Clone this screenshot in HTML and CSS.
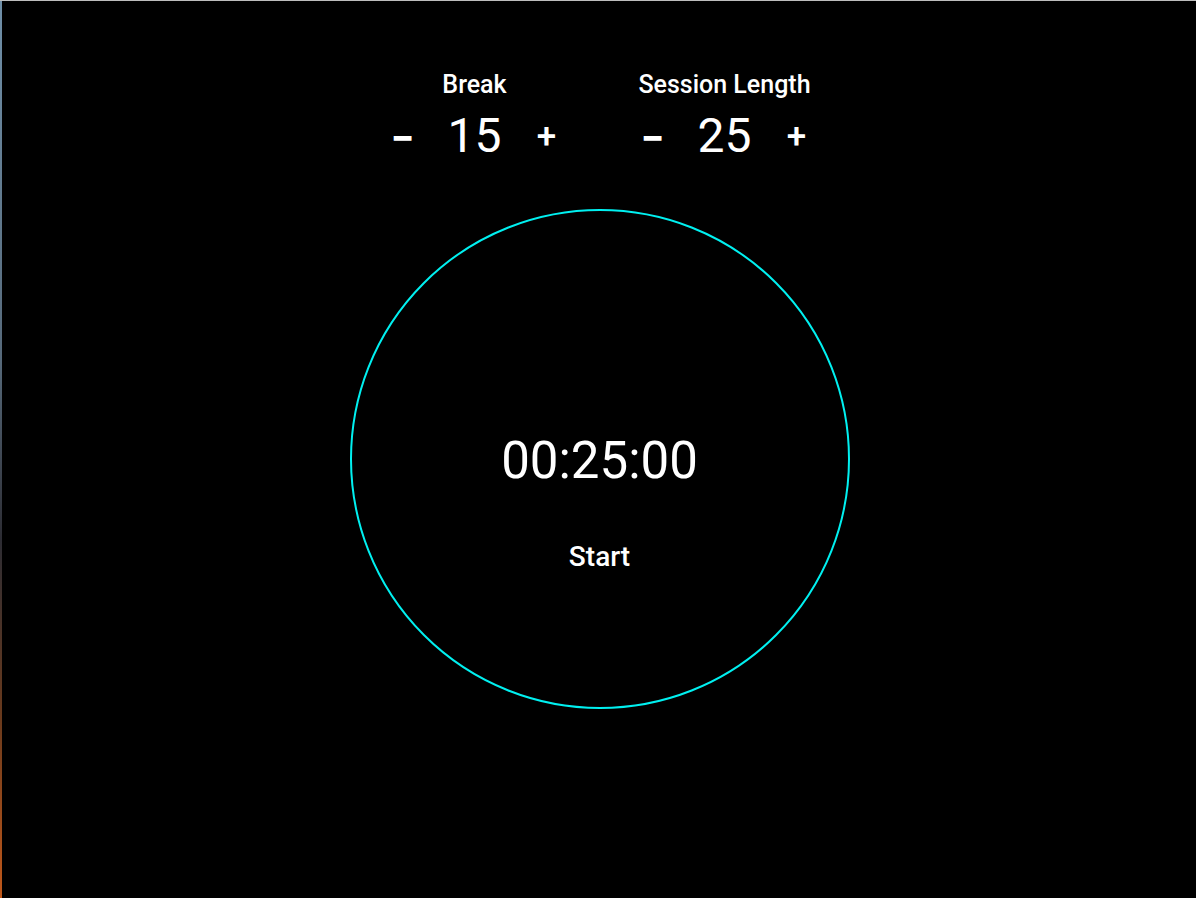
FILE: index.html
```html
<!DOCTYPE html>
<html lang="en">
<head>
<meta charset="utf-8">
<title>Pomodoro Clock</title>
<link rel="stylesheet" href="styles.css">
</head>
<body>
<div class="screen">
  <div class="desktop-edge"></div>
  <main class="app">
    <section class="settings">
      <div class="setting">
        <div class="setting-label">Break</div>
        <div class="setting-controls">
          <button class="adjust minus">−</button>
          <span class="setting-value">15</span>
          <button class="adjust plus">+</button>
        </div>
      </div>
      <div class="setting">
        <div class="setting-label">Session Length</div>
        <div class="setting-controls">
          <button class="adjust minus">−</button>
          <span class="setting-value">25</span>
          <button class="adjust plus">+</button>
        </div>
      </div>
    </section>
    <section class="clock">
      <div class="clock-time">00:25:00</div>
      <div class="clock-action">Start</div>
    </section>
  </main>
</div>
</body>
</html>
```
FILE: styles.css
```css
html, body {
  margin: 0;
  padding: 0;
  height: 100%;
  background: #000;
}

body {
  font-family: Roboto, "Liberation Sans", sans-serif;
  color: #fff;
  overflow: hidden;
}

.screen {
  display: flex;
  height: 898px;
  border-top: 1px solid #bdbdbd;
  box-sizing: border-box;
}

.desktop-edge {
  width: 2px;
  flex: none;
  background: linear-gradient(to bottom, #6f8fa8 0%, #56697a 40%, #2c2c33 60%, #6a3a1c 80%, #c0581a 100%);
}

.app {
  flex: 1;
  display: flex;
  flex-direction: column;
  align-items: center;
  padding-top: 69px;
  padding-left: 1px;
  background: #000;
}

.settings {
  display: flex;
}

.setting {
  width: 250px;
  display: flex;
  flex-direction: column;
  align-items: center;
  gap: 8px;
}

.setting-label {
  font-size: 25px;
  font-weight: 500;
  line-height: 30px;
}

.setting-controls {
  display: flex;
  align-items: center;
  gap: 36px;
  height: 56px;
}

.setting-value {
  font-size: 48px;
  line-height: 56px;
  width: 54px;
  text-align: center;
}

.adjust {
  background: none;
  border: none;
  padding: 0;
  color: #fff;
  font-family: Roboto, "Liberation Sans", sans-serif;
  line-height: 56px;
  width: 18px;
  display: flex;
  justify-content: center;
  cursor: pointer;
}

.minus {
  font-size: 42px;
  font-weight: 700;
  position: relative;
  top: 3px;
}

.plus {
  font-size: 35px;
  font-weight: 500;
  position: relative;
  top: 1px;
}

.clock {
  margin-top: 45px;
  width: 500px;
  height: 500px;
  box-sizing: border-box;
  border: 2px solid #00f0f0;
  border-radius: 50%;
  display: flex;
  flex-direction: column;
  align-items: center;
  padding-top: 220px;
}

.clock-time {
  font-size: 51px;
  line-height: 60px;
}

.clock-action {
  margin-top: 49px;
  font-size: 28px;
  font-weight: 500;
  line-height: 34px;
}
```
